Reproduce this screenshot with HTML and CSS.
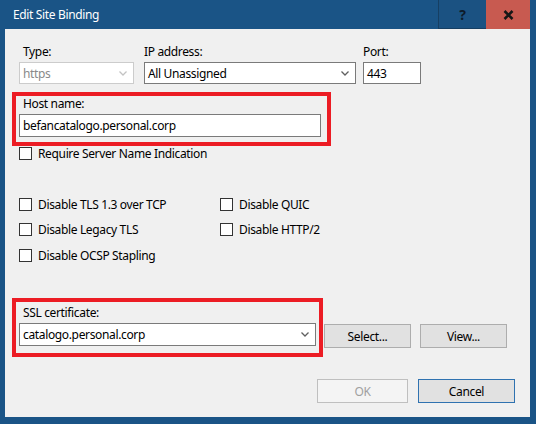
FILE: index.html
```html
<!DOCTYPE html>
<html lang="en">
<head>
<meta charset="utf-8"/>
<title>Edit Site Binding</title>
<link rel="stylesheet" href="styles.css">
</head>
<body>
<div class="window">
  <div class="titlebar">
    <span class="title">Edit Site Binding</span>
    <span class="cap help">?</span>
    <span class="cap close">
      <svg width="11" height="10" viewBox="0 0 11 10"><path d="M1.5 1 L9.5 9 M9.5 1 L1.5 9" stroke="#161616" stroke-width="2.6" fill="none"/></svg>
    </span>
  </div>

  <div class="client">
    <div class="binding-row">
      <div class="field type-field">
        <label class="indent">Type:</label>
        <div class="combo disabled">
          <span>https</span>
          <svg class="chev" width="8" height="5" viewBox="0 0 8 5"><polyline points="0.5,0.5 4,4 7.5,0.5" fill="none" stroke="#c3c3c3" stroke-width="1.3"/></svg>
        </div>
      </div>
      <div class="field ip-field">
        <label>IP address:</label>
        <div class="combo">
          <span>All Unassigned</span>
          <svg class="chev" width="8" height="5" viewBox="0 0 8 5"><polyline points="0.5,0.5 4,4 7.5,0.5" fill="none" stroke="#606060" stroke-width="1.3"/></svg>
        </div>
      </div>
      <div class="field port-field">
        <label>Port:</label>
        <div class="textbox">443</div>
      </div>
    </div>

    <div class="mark host-mark">
      <label class="indent">Host name:</label>
      <div class="textbox">befancatalogo.personal.corp</div>
    </div>

    <div class="check sni"><span class="box"></span>Require Server Name Indication</div>

    <div class="options">
      <div class="check"><span class="box"></span>Disable TLS 1.3 over TCP</div>
      <div class="check"><span class="box"></span>Disable QUIC</div>
      <div class="check"><span class="box"></span>Disable Legacy TLS</div>
      <div class="check"><span class="box"></span>Disable HTTP/2</div>
      <div class="check"><span class="box"></span>Disable OCSP Stapling</div>
    </div>

    <div class="cert-row">
      <div class="mark cert-mark">
        <label class="indent">SSL certificate:</label>
        <div class="combo">
          <span>catalogo.personal.corp</span>
          <svg class="chev" width="8" height="5" viewBox="0 0 8 5"><polyline points="0.5,0.5 4,4 7.5,0.5" fill="none" stroke="#606060" stroke-width="1.3"/></svg>
        </div>
      </div>
      <button class="btn select-btn">Select...</button>
      <button class="btn view-btn">View...</button>
    </div>

    <div class="footer">
      <button class="btn ok-btn" disabled>OK</button>
      <button class="btn cancel-btn">Cancel</button>
    </div>
  </div>
</div>
</body>
</html>
```

FILE: styles.css
```css
body {
  margin: 0;
  font-family: 'Noto Sans', 'Open Sans', sans-serif;
  font-size: 12px;
  letter-spacing: -0.35px;
  color: #000;
}
.window {
  width: 536px;
  height: 424px;
  box-sizing: border-box;
  background: #1a5486;
  padding: 0 6px 7px 5px;
  display: flex;
  flex-direction: column;
}
.titlebar {
  height: 29px;
  display: flex;
  align-items: stretch;
  flex-shrink: 0;
}
.title {
  flex: 1;
  color: #fff;
  padding-left: 8px;
  line-height: 29px;
}
.cap {
  display: flex;
  align-items: center;
  justify-content: center;
}
.help {
  width: 47px;
  border-left: 1px solid #163f63;
  border-bottom: 1px solid #163f63;
  background: #1b5282;
  color: #0d1b2a;
  font-weight: bold;
  font-size: 14px;
}
.close {
  width: 44px;
  background: #c85a50;
}
.client {
  flex: 1;
  background: #f0f0f0;
  padding: 15px 0 0 0;
  display: flex;
  flex-direction: column;
}
label {
  display: block;
  line-height: 16px;
  height: 16px;
  margin-bottom: 2px;
}
label.indent {
  padding-left: 4px;
}
.binding-row {
  display: flex;
  padding-left: 14px;
}
.field {
  display: flex;
  flex-direction: column;
}
.type-field { width: 115px; }
.ip-field { width: 212px; margin-left: 10px; }
.port-field { width: 58px; margin-left: 7px; }
.combo, .textbox {
  height: 22px;
  box-sizing: border-box;
  background: #fff;
  border: 1px solid #7a7a7a;
  display: flex;
  align-items: center;
  padding: 0 6px 0 3px;
}
.combo {
  justify-content: space-between;
}
.combo.disabled {
  border-color: #cccccc;
  color: #8a8a8a;
}
.mark {
  border: 4px solid #ec1c24;
  box-sizing: border-box;
}
.host-mark {
  margin: 8px 0 0 7px;
  width: 319px;
  padding: 0 6px 5px 3px;
}
.host-mark .textbox {
  height: 23px;
}
.check {
  display: flex;
  align-items: center;
  height: 14px;
}
.box {
  width: 13px;
  height: 13px;
  box-sizing: border-box;
  background: #fff;
  border: 1px solid #333;
  margin-right: 6px;
}
.sni {
  margin-left: 14px;
}
.options {
  margin: 37px 0 0 14px;
  display: grid;
  grid-template-columns: 201px auto;
  row-gap: 11.5px;
}
.cert-row {
  display: flex;
  align-items: flex-start;
  margin: 36px 0 0 7px;
}
.cert-mark {
  width: 311px;
  padding: 3px 3px 7px 3px;
}
.cert-mark .combo {
  height: 23px;
}
.btn {
  font-family: inherit;
  font-size: 12px;
  letter-spacing: inherit;
  color: #000;
  background: #e1e1e1;
  border: 1px solid #adadad;
  height: 24px;
  padding: 0;
}
.select-btn {
  width: 87px;
  margin: 26px 0 0 1px;
}
.view-btn {
  width: 87px;
  margin: 26px 0 0 9px;
}
.footer {
  display: flex;
  justify-content: flex-end;
  gap: 10px;
  margin-top: 22px;
  padding-right: 15px;
}
.ok-btn {
  width: 91px;
  background: #f4f4f4;
  border-color: #bfbfbf;
  color: #a0a0a0;
}
.cancel-btn {
  width: 97px;
  border-color: #2f72b0;
}
```
